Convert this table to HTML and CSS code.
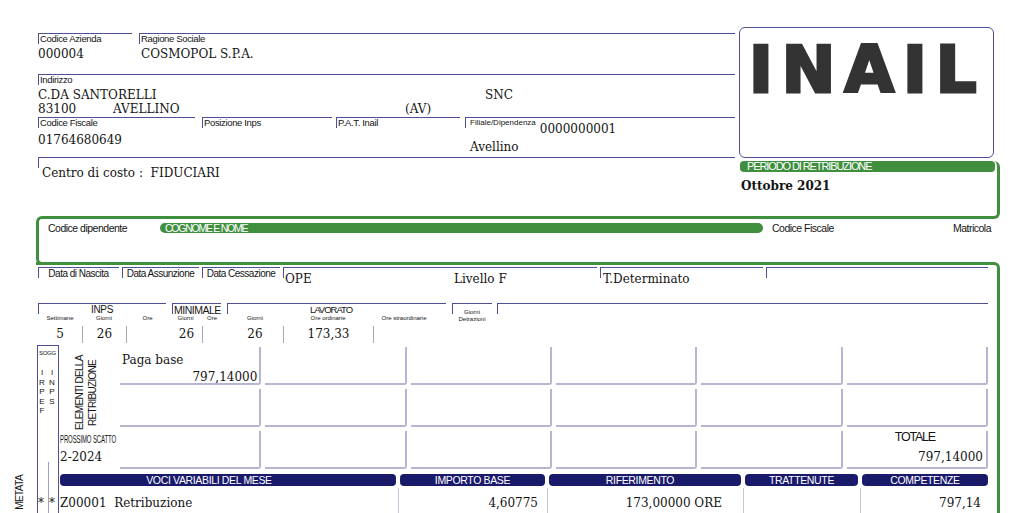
FILE: index.html
```html
<!DOCTYPE html>
<html lang="it">
<head>
<meta charset="utf-8">
<title>Cedolino</title>
<link rel="stylesheet" href="styles.css">
</head>
<body>
<div class="page">
  <section class="top">
    <div class="company">
      <div class="r1">
        <div class="brk f-cod"><div class="lbl">Codice Azienda</div><div class="val">000004</div></div>
        <div class="brk f-rag"><div class="lbl">Ragione Sociale</div><div class="val">COSMOPOL S.P.A.</div></div>
      </div>
      <div class="brk f-ind">
        <div class="lbl">Indirizzo</div>
        <div class="addr">
          <div class="aline"><span class="a-street">C.DA SANTORELLI</span><span>SNC</span></div>
          <div class="aline"><span class="a-cap">83100</span><span class="a-city">AVELLINO</span><span>(AV)</span></div>
        </div>
      </div>
      <div class="r3">
        <div class="brk f-cf"><div class="lbl">Codice Fiscale</div><div class="val">01764680649</div></div>
        <div class="brk f-inps"><div class="lbl">Posizione Inps</div></div>
        <div class="brk f-pat"><div class="lbl">P.A.T. Inail</div></div>
        <div class="brk f-fil">
          <div class="fil-top"><span class="lbl-s">Filiale/Dipendenza</span><span class="val">0000000001</span></div>
          <div class="val fil-city">Avellino</div>
        </div>
      </div>
      <div class="brk f-cc"><div class="val">Centro di costo :&nbsp; FIDUCIARI</div></div>
    </div>
    <aside class="side">
      <div class="inail"><span class="logo">INAIL</span></div>
      <div class="period">
        <div class="gbar">PERIODO DI RETRIBUZIONE</div>
        <div class="month">Ottobre 2021</div>
      </div>
    </aside>
  </section>

  <section class="emp">
    <div class="emp-code">Codice dipendente</div>
    <div class="emp-name">COGNOME E NOME</div>
    <div class="emp-cf">Codice Fiscale</div>
    <div class="emp-mat">Matricola</div>
  </section>

  <section class="low">
    <div class="rowa">
      <div class="brk"><div class="lc">Data di Nascita</div></div>
      <div class="brk"><div class="lc">Data Assunzione</div></div>
      <div class="brk"><div class="lc">Data Cessazione</div></div>
      <div class="brk ope"><span class="ope-q">OPE</span><span>Livello F</span></div>
      <div class="brk tdet">T.Determinato</div>
      <div class="brk"></div>
    </div>

    <div class="rowb">
      <div class="brk t-inps">INPS</div>
      <div class="brk t-min">MINIMALE</div>
      <div class="brk t-lav">LAVORATO</div>
      <div class="brk t-det"><div>Giorni</div><div>Detrazioni</div></div>
      <div class="brk t-rest"></div>

      <div class="sub s1">Settimane</div>
      <div class="sub s2">Giorni</div>
      <div class="sub s3">Ore</div>
      <div class="sub s4">Giorni</div>
      <div class="sub s5">Ore</div>
      <div class="sub s6">Giorni</div>
      <div class="sub s7">Ore ordinarie</div>
      <div class="sub s8">Ore straordinarie</div>

      <div class="num n1">5</div>
      <div class="num n2 sep">26</div>
      <div class="num n3 sep"></div>
      <div class="num n4">26</div>
      <div class="num n5 sep"></div>
      <div class="num n6">26</div>
      <div class="num n7 sep">173,33</div>
      <div class="num n8 sep"></div>
    </div>

    <div class="bot">
      <div class="sogg"></div>
      <div class="sogg-head">
        <div class="sogg-t">SOGG</div>
        <div class="letters">
          <div class="lcol"><span>I</span><span>R</span><span>P</span><span>E</span><span>F</span></div>
          <div class="lcol"><span>I</span><span>N</span><span>P</span><span>S</span></div>
        </div>
      </div>
      <div class="sogg-div"></div>
      <div class="stars"><span>*</span><span>*</span></div>
      <div class="metata">METATA</div>

      <div class="elem">
        <div class="lblock">
          <div class="vert">ELEMENTI DELLA RETRIBUZIONE</div>
          <div class="scatto">
            <div class="scatto-l"><span>PROSSIMO SCATTO</span></div>
            <div class="val">2-2024</div>
          </div>
        </div>
        <div class="cells">
          <div class="cell pb"><div>Paga base</div><div class="rv">797,14000</div></div>
          <div class="cell"></div><div class="cell"></div><div class="cell"></div><div class="cell"></div><div class="cell"></div>
          <div class="cell"></div><div class="cell"></div><div class="cell"></div><div class="cell"></div><div class="cell"></div><div class="cell"></div>
          <div class="cell"></div><div class="cell"></div><div class="cell"></div><div class="cell"></div><div class="cell"></div>
          <div class="cell tot"><div class="tot-l">TOTALE</div><div class="rv">797,14000</div></div>
        </div>
      </div>

      <div class="bars">
        <div class="bar b-voci">VOCI VARIABILI DEL MESE</div>
        <div class="bar">IMPORTO BASE</div>
        <div class="bar b-rif">RIFERIMENTO</div>
        <div class="bar">TRATTENUTE</div>
        <div class="bar">COMPETENZE</div>
      </div>

      <div class="data">
        <div class="d d1">Z00001&nbsp; Retribuzione</div>
        <div class="d d2">4,60775</div>
        <div class="d d3">173,00000 ORE</div>
        <div class="d d4"></div>
        <div class="d d5">797,14</div>
      </div>
    </div>
  </section>
</div>
</body>
</html>
```

FILE: styles.css
```css
:root {
  --line: #4f4f96;
  --bar: #1a1a6b;
  --green: #3f8f3f;
  --cell: #b6b6d2;
  --sep: #a8a8b8;
  --serif: "DejaVu Serif", serif;
  --sans: "Liberation Sans", Arial, sans-serif;
}

* { box-sizing: border-box; }

html, body {
  margin: 0;
  padding: 0;
  overflow: hidden;
  background: #fff;
}

body {
  font-family: var(--serif);
  font-size: 12px;
  color: #141414;
}

.page {
  width: 1000px;
  padding: 27px 0 0 36px;
}

/* bracket field: top rule + short left tick */
.brk {
  border-top: 1px solid var(--line);
  background: linear-gradient(var(--line), var(--line)) no-repeat 0 0 / 1px 10px;
}

.lbl {
  font-family: var(--sans);
  font-size: 9.5px;
  letter-spacing: -0.35px;
  line-height: 10px;
  height: 10px;
  padding-left: 2px;
  white-space: nowrap;
}

.val {
  line-height: 14px;
  white-space: nowrap;
}

/* ---------- top ---------- */
.top {
  display: grid;
  grid-template-columns: 697px 261px;
  column-gap: 4px;
  margin-left: 2px;
}

.company { padding-top: 6px; }

.r1 { display: flex; height: 41px; }
.r1 .val { margin-top: 3px; }
.f-cod { width: 94px; }
.f-rag { flex: 1; margin-left: 7px; }
.f-rag .val { padding-left: 2px; }

.f-ind { height: 43px; }
.addr { margin-top: 3px; line-height: 14px; white-space: nowrap; }
.aline { display: flex; }
.a-street { width: 447px; }
.a-cap { width: 75px; }
.a-city { width: 292px; }

.r3 { display: flex; height: 40px; }
.f-cf { width: 157px; }
.f-cf .val { margin-top: 5px; }
.f-inps { width: 130px; margin-left: 7px; }
.f-pat { width: 124px; margin-left: 4px; }
.f-fil { flex: 1; margin-left: 5px; }
.fil-top { display: flex; align-items: flex-start; }
.lbl-s {
  font-family: var(--sans);
  font-size: 8px;
  line-height: 10px;
  padding-left: 5px;
}
.fil-top .val { margin: 4px 0 0 4px; }
.fil-city { padding-left: 5px; margin-top: 4px; }

.f-cc { padding: 8px 0 0 4px; height: 30px; }

.side { display: flex; flex-direction: column; }

.inail {
  width: 255px;
  height: 131px;
  border: 1px solid var(--line);
  border-radius: 6px;
  padding: 10px 0 0 9px;
}

.logo {
  font-family: "DejaVu Sans", sans-serif;
  font-weight: bold;
  font-size: 64px;
  line-height: 64px;
  letter-spacing: 9px;
  color: #333;
  -webkit-text-stroke: 3px #333;
}

.period {
  margin-top: 3px;
  height: 58px;
  border-right: 3px solid var(--green);
  border-bottom: 3px solid var(--green);
  border-radius: 0 6px 6px 0;
}

.gbar {
  width: 255px;
  height: 11px;
  margin-left: 1px;
  background: var(--green);
  border-radius: 4px;
  color: #fff;
  font-family: var(--sans);
  font-size: 11px;
  line-height: 11px;
  letter-spacing: -1.1px;
  padding-left: 7px;
  white-space: nowrap;
}

.month {
  font-weight: bold;
  line-height: 14px;
  margin-top: 7px;
  padding-left: 2px;
}

/* ---------- employee ---------- */
.emp {
  margin-top: -3px;
  width: 958px;
  height: 49px;
  border: 3px solid var(--green);
  border-right: 0;
  border-radius: 6px 0 0 6px;
  display: flex;
  align-items: flex-start;
  padding: 4px 3px 0 9px;
  font-family: var(--sans);
  font-size: 10.5px;
  letter-spacing: -0.5px;
  line-height: 10px;
  white-space: nowrap;
}

.emp-code { width: 112px; }

.emp-name {
  width: 603px;
  height: 10px;
  background: var(--green);
  border-radius: 5px;
  color: #fff;
  letter-spacing: -1.25px;
  padding-left: 5px;
}

.emp-cf { margin-left: 9px; }
.emp-mat { margin-left: auto; }

/* ---------- lower ---------- */
.low {
  margin-top: -3px;
  border-top: 3px solid var(--green);
  border-right: 3px solid var(--green);
  border-top-right-radius: 6px;
}

.rowa {
  display: grid;
  grid-template-columns: 81px 77px 78px 314px 163px 222px;
  column-gap: 3px;
  margin: 2px 0 0 2px;
  height: 36px;
  width: 950px;
}

.lc {
  font-family: var(--sans);
  font-size: 10px;
  letter-spacing: -0.5px;
  line-height: 10px;
  text-align: center;
  padding-top: 1px;
  white-space: nowrap;
}

.ope { display: flex; padding: 4px 0 0 2px; line-height: 14px; }
.ope-q { width: 169px; }
.tdet { padding: 4px 0 0 3px; line-height: 14px; }

.rowb {
  display: grid;
  grid-template-columns: 44px 44px 43px 33px 25px 56px 90px 76px 45px 1fr;
  grid-template-rows: 11px 8px 21px;
  margin-left: 2px;
  width: 950px;
}

.rowb > .brk {
  grid-row: 1;
  font-family: var(--sans);
  line-height: 10px;
  padding-top: 1px;
  white-space: nowrap;
}

.t-inps { grid-column: 1 / 4; margin-right: 3px; text-align: center; font-size: 10px; letter-spacing: -0.3px; }
.t-min { grid-column: 4 / 6; margin: 0 6px 0 3px; padding-left: 2px; font-size: 10.5px; letter-spacing: -0.5px; }
.t-lav { grid-column: 6 / 9; margin-right: 3px; text-align: center; padding-right: 11px; font-size: 9.5px; letter-spacing: -1px; }
.rowb > .t-det {
  grid-column: 9;
  grid-row: 1 / 3;
  margin: 0 2px 0 3px;
  font-size: 6px;
  line-height: 7px;
  padding-top: 5px;
  text-align: center;
}
.rowb > .t-rest { grid-column: 10; grid-row: 1 / 3; margin-left: 3px; }

.sub {
  grid-row: 2;
  font-family: var(--sans);
  font-size: 6px;
  line-height: 8px;
  text-align: center;
  white-space: nowrap;
}
.s1 { grid-column: 1; }
.s2 { grid-column: 2; }
.s3 { grid-column: 3; }
.s4 { grid-column: 4; }
.s5 { grid-column: 5; padding-right: 5px; }
.s6 { grid-column: 6; }
.s7 { grid-column: 7; }
.s8 { grid-column: 8; padding-right: 14px; }

.num {
  grid-row: 3;
  margin-top: 4px;
  height: 17px;
  line-height: 17px;
  text-align: center;
}
.n1 { grid-column: 1; }
.n2 { grid-column: 2; }
.n3 { grid-column: 3; }
.n4 { grid-column: 4; padding-left: 2px; }
.n5 { grid-column: 5; }
.n6 { grid-column: 6; }
.n7 { grid-column: 7; }
.n8 { grid-column: 8; }
.sep { border-left: 1px solid var(--sep); }

/* ---------- bottom block ---------- */
.bot {
  display: grid;
  grid-template-columns: 23px 928px;
  grid-template-rows: 126px 17px 30px;
  margin: 2px 0 0 1px;
}

.sogg {
  grid-column: 1;
  grid-row: 1 / 4;
  width: 22px;
  border: 1px solid var(--line);
}

.sogg-head {
  grid-column: 1;
  grid-row: 1;
  padding-top: 5px;
  font-family: var(--sans);
}

.sogg-t {
  font-size: 6px;
  line-height: 6px;
  letter-spacing: -0.3px;
  padding-left: 2px;
}

.letters { display: flex; margin-top: 12px; }
.lcol {
  width: 10px;
  display: flex;
  flex-direction: column;
  align-items: center;
  font-size: 8px;
  line-height: 9.5px;
}

.sogg-div {
  grid-column: 1;
  grid-row: 2 / 4;
  margin: -9px 0 0 11px;
  width: 1px;
  background: #a2a2c0;
}

.stars {
  grid-column: 1;
  grid-row: 3;
  display: flex;
  gap: 5px;
  padding: 8px 0 0 1px;
  line-height: 14px;
}

.metata {
  grid-column: 1;
  grid-row: 2 / 4;
  justify-self: start;
  align-self: start;
  margin: 4px 0 0 -23px;
  writing-mode: vertical-rl;
  transform: rotate(180deg);
  font-family: var(--sans);
  font-size: 10px;
  line-height: 12px;
  letter-spacing: -0.6px;
}

.elem {
  grid-column: 2;
  grid-row: 1;
  display: flex;
}

.lblock {
  width: 60px;
  display: flex;
  flex-direction: column;
  padding-bottom: 7px;
}

.vert {
  writing-mode: vertical-rl;
  transform: rotate(180deg);
  height: 76px;
  margin: 10px 0 0 13px;
  font-family: var(--sans);
  font-size: 10px;
  line-height: 13px;
  letter-spacing: -0.7px;
  text-align: center;
  align-self: flex-start;
}

.scatto { margin-top: auto; }
.scatto-l {
  font-family: var(--sans);
  font-size: 10px;
  line-height: 12px;
  letter-spacing: -0.2px;
  white-space: nowrap;
  margin-bottom: 4px;
}
.scatto-l span {
  display: inline-block;
  transform: scaleX(0.6);
  transform-origin: left center;
}

.cells {
  flex: 1;
  display: grid;
  grid-template-columns: repeat(6, 1fr);
  grid-template-rows: repeat(3, 38px);
  gap: 4px;
  margin-top: 2px;
}

.cell {
  border-right: 2px solid var(--cell);
  border-bottom: 2px solid var(--cell);
  border-bottom-right-radius: 3px;
}

.pb { padding: 6px 2px 0 2px; line-height: 14px; }
.rv { text-align: right; margin-top: 3px; line-height: 14px; }

.tot { padding-right: 3px; }
.tot-l {
  font-family: var(--sans);
  font-size: 12.5px;
  letter-spacing: -1.2px;
  line-height: 12px;
  text-align: center;
}
.tot .rv { margin-top: 7px; }

.bars, .data {
  grid-column: 2;
  display: grid;
  grid-template-columns: 336px 145px 192px 113px 1fr;
  column-gap: 4px;
}

.bars { grid-row: 2; padding-top: 3px; }

.bar {
  height: 12px;
  background: var(--bar);
  border-radius: 4px;
  color: #fff;
  font-family: var(--sans);
  font-size: 10.5px;
  line-height: 12px;
  letter-spacing: -0.35px;
  text-align: center;
  white-space: nowrap;
}
.b-voci { padding-right: 38px; }
.b-rif { padding-right: 10px; }

.data { grid-row: 3; }
.d {
  padding-top: 8px;
  line-height: 14px;
  white-space: nowrap;
}
.d + .d {
  margin-left: -2px;
  border-left: 1px solid #c6c6d4;
  text-align: right;
}
.d2 { padding-right: 7px; }
.d3 { padding-right: 19px; }
.d5 { padding-right: 7px; }
```
